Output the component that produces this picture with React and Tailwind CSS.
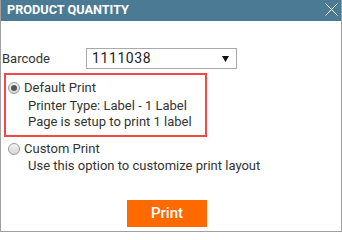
import React from "react"

const Radio = ({ checked }) => (
    <span className="w-[12px] h-[12px] rounded-full border border-[#9a9a9a] bg-gradient-to-b from-[#f4f4f4] to-[#d6d6d6] flex items-center justify-center shrink-0">
        {checked && <span className="w-[6px] h-[6px] rounded-full bg-[#555]" />}
    </span>
)

export default function App() {
    return (
        <div className="w-[342px] h-[233px] bg-white font-['Roboto',sans-serif] text-[13px] text-[#333]">
            <div className="w-[342px] h-[232px] border-x border-b border-[#a0a0a0] flex flex-col">
                <div className="h-[21px] bg-[#4b7a95] flex items-center justify-between pl-[6px] pr-[3px]">
                    <span className="text-white font-bold text-[12.7px] leading-none">PRODUCT QUANTITY</span>
                    <svg width="13" height="13" viewBox="0 0 13 13" className="mb-[3px]">
                        <path d="M0.5 0.5 L12.5 12.5 M12.5 0.5 L0.5 12.5" stroke="#fff" strokeWidth="1" />
                    </svg>
                </div>

                <div className="flex items-center mt-[27px] pl-[1px]">
                    <span className="w-[84px]">Barcode</span>
                    <div className="w-[151px] h-[21px] border border-[#a9a9a9] flex items-center justify-between pl-[5px] pr-[7px]">
                        <span className="text-[14px] tracking-[0.6px] text-[#222]">1111038</span>
                        <svg width="7" height="6" viewBox="0 0 7 6">
                            <path d="M0 0 H7 L3.5 6 Z" fill="#111" />
                        </svg>
                    </div>
                </div>

                <div className="ml-[3px] mt-[4px] w-[203px] h-[64px] border-2 border-[#f24848]">
                    <div className="flex items-center gap-[4px] pl-[2px] pt-[4px] leading-[17px]">
                        <Radio checked />
                        <span>Default Print</span>
                    </div>
                    <div className="pl-[22px] mt-[2px] leading-[16px]">
                        <div>Printer Type: Label - 1 Label</div>
                        <div>Page is setup to print 1 label</div>
                    </div>
                </div>

                <div className="flex items-center gap-[4px] pl-[7px] mt-[3px] leading-[17px]">
                    <Radio />
                    <span>Custom Print</span>
                </div>
                <div className="pl-[27px] leading-[17px]">Use this option to customize print layout</div>

                <div className="flex justify-center pr-[8px] mt-[26px]">
                    <button className="w-[80px] h-[27px] bg-[#ff6a00] text-white font-medium text-[15px]">Print</button>
                </div>
            </div>
        </div>
    )
}
